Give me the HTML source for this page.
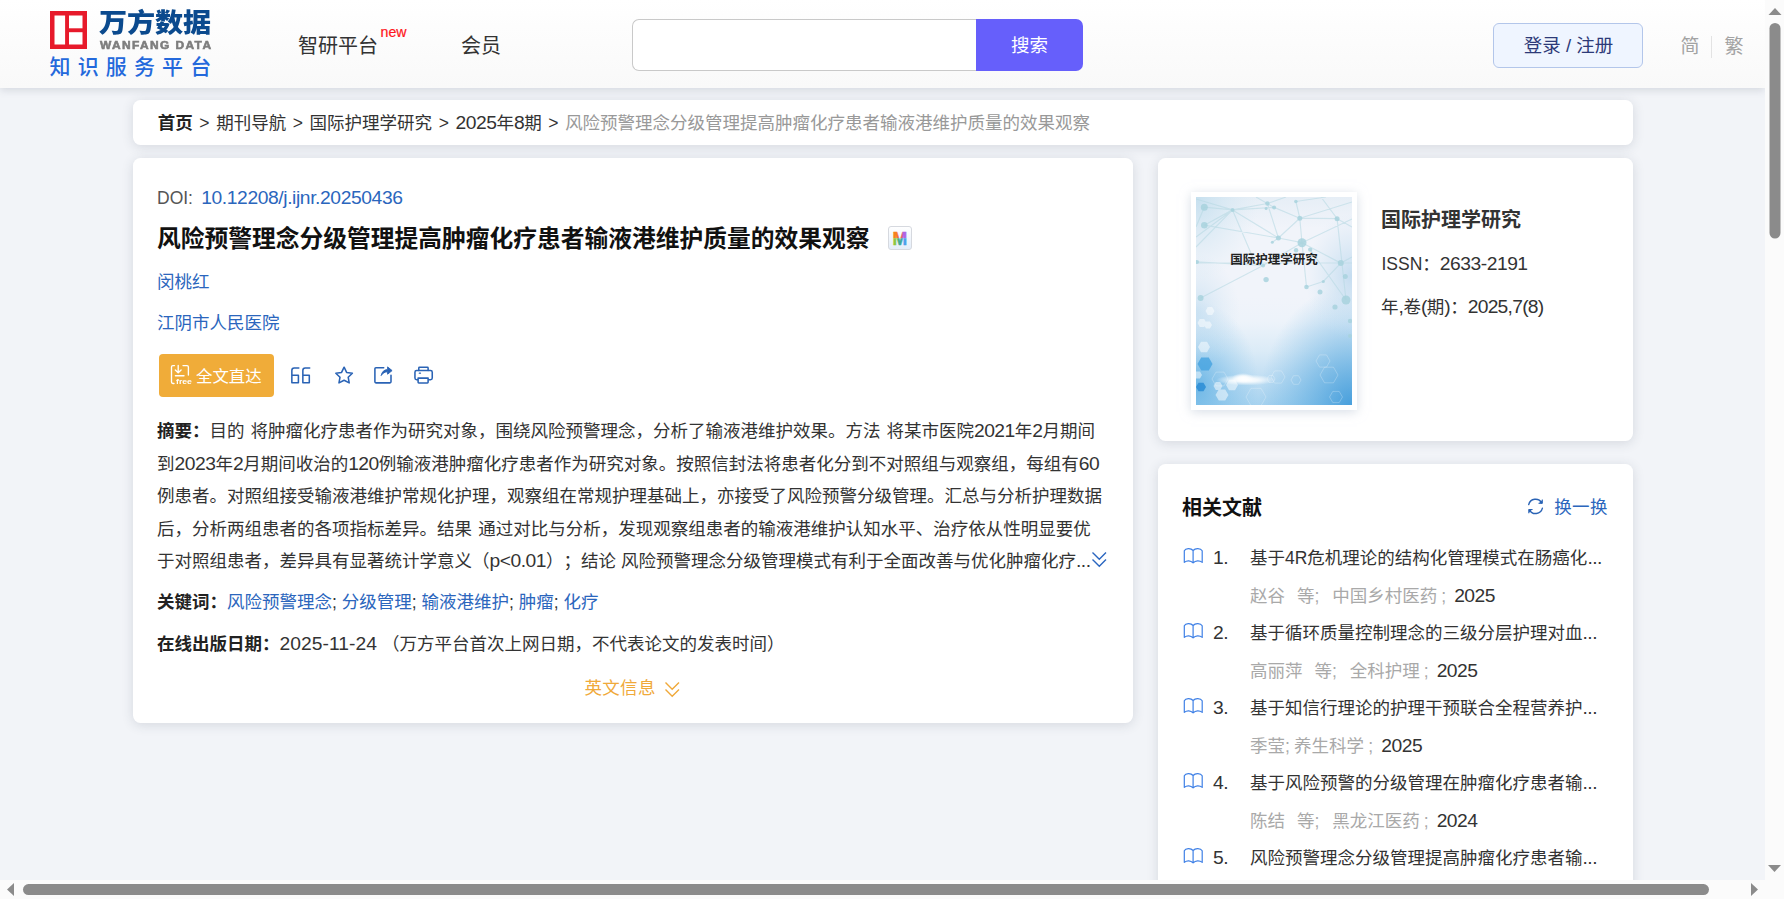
<!DOCTYPE html>
<html lang="zh-CN">
<head>
<meta charset="utf-8">
<title>风险预警理念分级管理提高肿瘤化疗患者输液港维护质量的效果观察</title>
<style>
*{box-sizing:border-box;margin:0;padding:0}
html,body{width:1784px;height:899px;overflow:hidden;background:#f2f4f8}
body{position:relative;font-family:"Liberation Sans","Noto Sans CJK SC",sans-serif;color:#333;font-size:17.5px;text-spacing-trim:space-all}
a{color:inherit;text-decoration:none}
.abs{position:absolute;white-space:nowrap}
#view{position:absolute;left:0;top:0;width:1765px;height:880px;overflow:hidden;background:#f2f4f8}
/* header */
#hdr{position:absolute;left:0;top:0;width:1765px;height:88px;background:linear-gradient(#ffffff 0%,#fdfdfd 30%,#f9f9f9 100%);box-shadow:0 2px 8px rgba(90,100,120,.2)}
.card{position:absolute;background:#fff;border-radius:7.500px;box-shadow:0 2px 12px rgba(50,60,80,.15)}
.blue{color:#2b66bd}
.b{font-weight:700;color:#222}
.n{font-size:1.1em;letter-spacing:-.48px}
.t{position:absolute;white-space:nowrap;line-height:24px;height:24px;margin-top:1px}
</style>
</head>
<body>
<div id="view">

<!-- ================= HEADER ================= -->
<div id="hdr">
  <!-- logo -->
  <svg class="abs" style="left:50px;top:11px" width="38" height="38" viewBox="0 0 38 38">
    <rect x="2.250" y="2.250" width="32.500" height="33.500" fill="#fff" stroke="#e71a2b" stroke-width="4.500"/>
    <rect x="15.100" y="2" width="3.900" height="34" fill="#e71a2b"/>
    <rect x="18" y="17.300" width="17" height="3.900" fill="#e71a2b"/>
  </svg>
  <div class="abs" id="lg1" style="left:99px;top:4.400px;font-family:'Liberation Sans','Noto Sans CJK SC',sans-serif;font-weight:900;font-size:26.500px;line-height:38px;color:#0b4a8e;letter-spacing:-.1px;transform:scaleX(1.062);transform-origin:0 100%">万方数据</div>
  <div class="abs" id="lg2" style="left:100px;top:38px;font-weight:700;font-size:10.6px;line-height:14px;color:#7f7f7f;letter-spacing:1.25px;transform:scaleX(1.125);transform-origin:0 0;-webkit-text-stroke:.55px #7b7b7b">WANFANG DATA</div>
  <div class="abs" id="lg3" style="left:49.500px;top:51.600px;font-family:'Liberation Sans','Noto Sans CJK SC',sans-serif;font-size:21px;font-weight:500;line-height:30px;color:#2469dc;letter-spacing:7.150px">知识服务平台</div>

  <div class="abs" id="nav1" style="left:298px;top:32px;font-size:20px;line-height:28px;color:#333">智研平台</div>
  <div class="abs" id="nav1n" style="left:380.500px;top:23.600px;font-size:14.200px;line-height:16px;color:#ff1520;-webkit-text-stroke:.2px #ff1520">new</div>
  <div class="abs" id="nav2" style="left:461px;top:32px;font-size:20px;line-height:28px;color:#333">会员</div>

  <!-- search -->
  <div class="abs" style="left:632px;top:19px;width:346px;height:52px;background:#fff;border:1px solid #c9c9c9;border-right:none;border-radius:7px 0 0 7px"></div>
  <div class="abs" id="sbtn" style="left:976px;top:19px;width:107px;height:52px;background:#665ffb;border-radius:0 7px 7px 0;color:#fff;font-size:18.500px;line-height:54.500px;text-align:center">搜索</div>

  <!-- login -->
  <div class="abs" id="login" style="left:1493px;top:23px;width:150px;height:45px;background:#eff5ff;border:1px solid #b3c6ea;border-radius:6px;color:#2d3a78;font-size:18.500px;line-height:44px;padding-left:1px;text-align:center">登录 / 注册</div>
  <div class="abs" id="jian" style="left:1680.500px;top:34.300px;font-size:19px;line-height:26px;color:#a3a3a3">简</div>
  <div class="abs" style="left:1711px;top:36px;width:1px;height:22px;background:#e3e3e3"></div>
  <div class="abs" id="fan" style="left:1724.500px;top:34.300px;font-size:19px;line-height:26px;color:#a3a3a3">繁</div>
</div>

<!-- ================= BREADCRUMB ================= -->
<div class="card" style="left:133px;top:100px;width:1500px;height:45px"></div>
<div class="t" id="bc" style="left:157.700px;top:110px;font-size:17.5px;color:#333;word-spacing:1.75px"><span class="b">首页</span> &gt; 期刊导航 &gt; 国际护理学研究 &gt; <span class="n">2025</span>年<span class="n">8</span>期 &gt; <span style="color:#999">风险预警理念分级管理提高肿瘤化疗患者输液港维护质量的效果观察</span></div>

<!-- ================= MAIN CARD ================= -->
<div class="card" style="left:133px;top:158px;width:1000px;height:565px"></div>
<div class="t" id="doi" style="left:157px;top:185px;color:#555">DOI: <span class="blue n" style="margin-left:3.400px;letter-spacing:-.4px">10.12208/j.ijnr.20250436</span></div>
<div class="t" id="title" style="left:157px;top:222px;font-size:23.75px;line-height:32px;height:32px;font-weight:700;color:#111">风险预警理念分级管理提高肿瘤化疗患者输液港维护质量的效果观察</div>
<svg class="abs" id="micon" style="left:888px;top:226px" width="24" height="24" viewBox="0 0 24 24">
  <defs>
    <linearGradient id="mbg" x1="0" y1="0" x2="0" y2="1"><stop offset="0" stop-color="#ffffff"/><stop offset="1" stop-color="#e4edf9"/></linearGradient>
    <linearGradient id="mtop" gradientUnits="userSpaceOnUse" x1="4.700" y1="0" x2="19" y2="0"><stop offset="0" stop-color="#f7811e"/><stop offset=".28" stop-color="#f7811e"/><stop offset=".42" stop-color="#e95a52"/><stop offset=".6" stop-color="#e95a52"/><stop offset=".74" stop-color="#b45fe3"/><stop offset="1" stop-color="#a86ae6"/></linearGradient>
    <linearGradient id="mbot" gradientUnits="userSpaceOnUse" x1="4.700" y1="0" x2="19" y2="0"><stop offset="0" stop-color="#8dc63f"/><stop offset=".28" stop-color="#8dc63f"/><stop offset=".42" stop-color="#3fa99a"/><stop offset=".6" stop-color="#3fa99a"/><stop offset=".74" stop-color="#4aa0ea"/><stop offset="1" stop-color="#4aa0ea"/></linearGradient>
    <clipPath id="mc1"><rect x="0" y="0" width="24" height="12.200"/></clipPath>
    <clipPath id="mc2"><rect x="0" y="12.200" width="24" height="12"/></clipPath>
  </defs>
  <rect x=".5" y=".5" width="23" height="23" rx="2.500" fill="url(#mbg)" stroke="#d6d9df"/>
  <text x="11.900" y="18.700" text-anchor="middle" font-family="Liberation Sans, sans-serif" font-weight="700" font-size="17.600" fill="url(#mtop)" stroke="url(#mtop)" stroke-width=".5" clip-path="url(#mc1)">M</text>
  <text x="11.900" y="18.700" text-anchor="middle" font-family="Liberation Sans, sans-serif" font-weight="700" font-size="17.600" fill="url(#mbot)" stroke="url(#mbot)" stroke-width=".5" clip-path="url(#mc2)">M</text>
</svg>
<div class="t blue" id="author" style="left:157px;top:269px">闵桃红</div>
<div class="t blue" id="org" style="left:157px;top:310px">江阴市人民医院</div>

<div class="abs" id="ftbtn" style="left:159px;top:354px;width:115px;height:43px;background:#f0ac39;border-radius:4px"></div>
<svg class="abs" id="ftico" style="left:169px;top:363px" width="24" height="24" viewBox="0 0 24 24" fill="none" stroke="#fff" stroke-width="1.350" stroke-linecap="round" stroke-linejoin="round">
  <path d="M5.500 2.600H3.900a1.400 1.400 0 0 0-1.400 1.400v15.100a1.400 1.400 0 0 0 1.400 1.400H5"/>
  <path d="M14 2.600h4a1.400 1.400 0 0 1 1.400 1.400V12"/>
  <path d="M9.200 2.500v6.900M6.300 6.900l2.900 2.900 2.900-2.900M6.400 12.700h8.600"/>
</svg>
<div class="abs" id="fttxt0" style="left:175.500px;top:376.500px;font-size:8px;line-height:10px;color:#fff;font-weight:700;transform:scaleX(1.08);transform-origin:0 0">free</div>
<div class="abs" id="fttxt" style="left:196px;top:364.200px;font-size:16.400px;line-height:24px;color:#fff">全文直达</div>

<svg class="abs" id="icons" style="left:285px;top:360px" width="155" height="30" viewBox="0 0 155 30" fill="none" stroke="#2a63b5" stroke-width="1.550" stroke-linejoin="round" stroke-linecap="round">
  <!-- quote -->
  <path d="M13.800 8H9.200Q6.850 8 6.850 10.400V22.650H13.400V15.300H6.850"/>
  <path d="M24.700 8H20.200Q17.850 8 17.850 10.400V22.650H24.300V15.300H17.850"/>
  <!-- star -->
  <path d="M59.10 7.20L61.63 12.42L67.37 13.21L63.19 17.23L64.21 22.94L59.10 20.20L53.99 22.94L55.01 17.23L50.83 13.21L56.57 12.42Z"/>
  <!-- share -->
  <path d="M98.700 7.700H90.900a1 1 0 0 0-1 1V21.850a1 1 0 0 0 1 1h14.100a1 1 0 0 0 1-1V15.300"/>
  <path d="M96.300 15.200c.6-3.400 2.600-5.400 6.300-5.700V6.900l4.500 3.700-4.500 3.600v-2.400c-2.700 .1-4.600 1.100-6.300 3.400z" fill="#2a63b5" stroke-width=".9"/>
  <!-- print -->
  <path d="M133.800 10.400V7.900a.7 .7 0 0 1 .7-.7h7.900a.7 .7 0 0 1 .7 .7V10.400"/>
  <rect x="129.950" y="10.500" width="17.300" height="9.200" rx="1.700"/>
  <path d="M133.100 18.100h10v4.100a.7 .7 0 0 1-.7 .7h-8.600a.7 .7 0 0 1-.7-.7z" fill="#fff"/>
  <path d="M134.300 13.200h1.200" stroke-width="1.200"/>
</svg>

<div class="t" id="ab1" style="left:157px;top:418px;word-spacing:1.100px"><span class="b">摘要：</span>目的 将肿瘤化疗患者作为研究对象，围绕风险预警理念，分析了输液港维护效果。方法 将某市医院<span class="n">2021</span>年<span class="n">2</span>月期间</div>
<div class="t" id="ab2" style="left:157px;top:450.5px">到<span class="n">2023</span>年<span class="n">2</span>月期间收治的<span class="n">120</span>例输液港肿瘤化疗患者作为研究对象。按照信封法将患者化分到不对照组与观察组，每组有<span class="n">60</span></div>
<div class="t" id="ab3" style="left:157px;top:483px">例患者。对照组接受输液港维护常规化护理，观察组在常规护理基础上，亦接受了风险预警分级管理。汇总与分析护理数据</div>
<div class="t" id="ab4" style="left:157px;top:515.500px;word-spacing:1.300px">后，分析两组患者的各项指标差异。结果 通过对比与分析，发现观察组患者的输液港维护认知水平、治疗依从性明显要优</div>
<div class="t" id="ab5" style="left:157px;top:548px">于对照组患者，差异具有显著统计学意义（<span class="n">p&lt;0.01</span>）；结论 风险预警理念分级管理模式有利于全面改善与优化肿瘤化疗<span class="n">...</span></div>
<svg class="abs" id="abchev" style="left:1090px;top:550px" width="18" height="19" viewBox="0 0 18 19" fill="none" stroke="#2a66c0" stroke-width="1.4"><path d="M2.500 2.500L9.300 9.200L16 2.500M2.500 9.600L9.300 16.300L16 9.600"/></svg>

<div class="t" id="kw" style="left:157px;top:589px"><span class="b">关键词：</span><span class="blue">风险预警理念</span>; <span class="blue">分级管理</span>; <span class="blue">输液港维护</span>; <span class="blue">肿瘤</span>; <span class="blue">化疗</span></div>
<div class="t" id="pd" style="left:157px;top:631px"><span class="b">在线出版日期：</span><span class="n" style="letter-spacing:.05px">2025-11-24</span> （万方平台首次上网日期，不代表论文的发表时间）</div>
<div class="t" id="eninfo" style="left:584.500px;top:675px;color:#f0a93a;letter-spacing:.3px">英文信息</div>
<svg class="abs" id="enchev" style="left:663px;top:680px" width="18" height="19" viewBox="0 0 18 19" fill="none" stroke="#f0a93a" stroke-width="1.400"><path d="M2.500 2.500L9.200 9.200L16 2.500M2.500 9.600L9.200 16.300L16 9.600"/></svg>

<!-- ================= SIDE CARDS ================= -->
<div class="card" style="left:1158px;top:158px;width:475px;height:283px"></div>
<div class="abs" id="coverbox" style="left:1191px;top:192px;width:166px;height:218px;background:#fff;box-shadow:0 2px 10px rgba(190,200,215,.6)"></div>
<svg class="abs" id="cover" style="left:1196px;top:196.500px" width="156" height="208.500" viewBox="0 0 156 208.500">
  <defs>
    <linearGradient id="cv1" x1="0" y1="0" x2="0" y2="1"><stop offset="0" stop-color="#e6eef6"/><stop offset=".15" stop-color="#f1f4fa"/><stop offset=".48" stop-color="#f1f4fa"/><stop offset=".6" stop-color="#edf3fa"/><stop offset=".74" stop-color="#dbebf7"/><stop offset=".87" stop-color="#c0def3"/><stop offset="1" stop-color="#a6d2ef"/></linearGradient>
    <radialGradient id="cv3" cx="1" cy="1.020" r=".6"><stop offset="0" stop-color="#3f9ada" stop-opacity=".95"/><stop offset=".5" stop-color="#55a8df" stop-opacity=".5"/><stop offset="1" stop-color="#6ab4e4" stop-opacity="0"/></radialGradient>
    <radialGradient id="cv5" cx="0" cy=".9" r=".4"><stop offset="0" stop-color="#5aaee3" stop-opacity=".8"/><stop offset="1" stop-color="#7fc0e8" stop-opacity="0"/></radialGradient>
    <radialGradient id="cv6" cx="0" cy="0" r=".4"><stop offset="0" stop-color="#c2deee" stop-opacity=".9"/><stop offset="1" stop-color="#d5e8f3" stop-opacity="0"/></radialGradient>
    <radialGradient id="cv7" cx="1" cy=".38" r=".3"><stop offset="0" stop-color="#bcd8ee" stop-opacity=".85"/><stop offset="1" stop-color="#d0e4f3" stop-opacity="0"/></radialGradient>
    <radialGradient id="cv8" cx="0" cy=".55" r=".28"><stop offset="0" stop-color="#bfdcf0" stop-opacity=".7"/><stop offset="1" stop-color="#d0e4f3" stop-opacity="0"/></radialGradient>
    <filter id="cvb" x="-5%" y="-5%" width="110%" height="110%"><feGaussianBlur stdDeviation=".35"/></filter>
    <radialGradient id="cv4" cx=".5" cy=".5" r=".5"><stop offset="0" stop-color="#ffffff" stop-opacity="1"/><stop offset=".4" stop-color="#ffffff" stop-opacity=".8"/><stop offset="1" stop-color="#ffffff" stop-opacity="0"/></radialGradient>
  </defs>
  <rect width="156" height="208.500" fill="url(#cv1)"/>
  <rect width="156" height="208.500" fill="url(#cv3)"/>
  <rect width="156" height="208.500" fill="url(#cv5)"/>
  <rect width="156" height="208.500" fill="url(#cv6)"/>
  <rect width="156" height="208.500" fill="url(#cv7)"/>
  <rect width="156" height="208.500" fill="url(#cv8)"/>
  <path d="M8.3 10.2L36.5 12.9M36.5 12.9L82.4 41M82.4 41L106 45.7M8.3 28.2L36.5 12.9M8.3 28.2L82.4 41M36.5 12.9L71.4 6.5M36.5 12.9L78.1 10.4M36.5 12.9L60 68M78.1 10.4L103.8 21.2M103.8 21.2L141.1 21.7M103.8 21.2L106 45.7M103.8 21.2L82.4 41M99.9 4.5L103.8 21.2M71.4 6.5L82.4 41M106 45.7L156 22M106 45.7L110.5 90M106 45.7L144.8 66.1M0 64.9L67.1 68.5M67.1 68.5L106 45.7M4.6 101L67.1 68.5M110.5 90L127.3 84.5M0 2L36.5 12.9M36.5 12.9L0 50M8.3 10.2L0 30M71.4 6.5L90 0M99.9 4.5L130 0M141.1 21.7L125 0M141.1 21.7L156 30M141.1 21.7L150 103M144.8 66.1L156 60M114.2 52.6L150 103M78.1 10.4L60 0M103.8 21.2L156 5M0 40L36.5 12.9M82.4 41L76.3 45.3M127.3 84.5L144.8 66.1M0 66L156 66" stroke="#b5d8e2" stroke-width="1.200" opacity=".55" fill="none" filter="url(#cvb)"/>
  <g fill="#a6d2dd" opacity=".8"><circle cx="8.3" cy="10.2" r="3.5"/><circle cx="8.3" cy="28.2" r="3.3"/><circle cx="36.5" cy="12.9" r="2"/><circle cx="71.4" cy="6.5" r="2.2"/><circle cx="78.1" cy="10.4" r="2"/><circle cx="70.1" cy="11.6" r="1.5"/><circle cx="99.9" cy="4.5" r="1.8"/><circle cx="103.8" cy="21.2" r="2.5"/><circle cx="141.1" cy="21.7" r="2.5"/><circle cx="82.4" cy="41" r="2.5"/><circle cx="76.3" cy="45.3" r="1.5"/><circle cx="106" cy="45.7" r="4.5"/><circle cx="114.2" cy="52.6" r="2.2"/><circle cx="100.1" cy="53.2" r="2.2"/><circle cx="1" cy="64.9" r="2"/><circle cx="67.1" cy="68.5" r="2"/><circle cx="144.8" cy="66.1" r="3"/><circle cx="70.1" cy="82.6" r="2.7"/><circle cx="149.3" cy="79.6" r="2.5"/><circle cx="127.3" cy="84.5" r="1.6"/><circle cx="110.5" cy="90" r="2.3"/><circle cx="124" cy="95.1" r="2.5"/><circle cx="4.6" cy="101" r="3"/><circle cx="150" cy="103" r="4.5"/><circle cx="139" cy="110" r="2.6"/><circle cx="154" cy="124" r="2.2"/><circle cx="154" cy="139" r="2"/></g>
  <path d="M18.5 114.0L16.2 117.9L11.8 117.9L9.5 114.0L11.7 110.1L16.2 110.1ZM10.5 126.0L8.2 129.9L3.8 129.9L1.5 126.0L3.7 122.1L8.2 122.1ZM16.0 128.0L14.0 131.5L10.0 131.5L8.0 128.0L10.0 124.5L14.0 124.5ZM14.0 150.0L11.0 155.2L5.0 155.2L2.0 150.0L5.0 144.8L11.0 144.8ZM26.5 189.0L24.2 192.9L19.8 192.9L17.5 189.0L19.8 185.1L24.2 185.1ZM42.0 188.0L39.0 193.2L33.0 193.2L30.0 188.0L33.0 182.8L39.0 182.8ZM6.0 178.0L4.0 181.5L0.0 181.5L-2.0 178.0L-0.0 174.5L4.0 174.5ZM32.5 198.0L29.2 203.6L22.8 203.6L19.5 198.0L22.7 192.4L29.2 192.4Z" fill="#ffffff" opacity=".5"/>
  <path d="M32.0 182.0L28.0 188.9L20.0 188.9L16.0 182.0L20.0 175.1L28.0 175.1ZM89.0 180.0L85.5 186.1L78.5 186.1L75.0 180.0L78.5 173.9L85.5 173.9ZM79.0 182.0L77.0 185.5L73.0 185.5L71.0 182.0L73.0 178.5L77.0 178.5ZM70.0 200.0L65.0 208.7L55.0 208.7L50.0 200.0L55.0 191.3L65.0 191.3ZM134.0 164.0L130.5 170.1L123.5 170.1L120.0 164.0L123.5 157.9L130.5 157.9ZM142.0 178.0L137.5 185.8L128.5 185.8L124.0 178.0L128.5 170.2L137.5 170.2ZM146.5 200.0L143.2 205.6L136.8 205.6L133.5 200.0L136.8 194.4L143.2 194.4ZM105.0 183.0L102.5 187.3L97.5 187.3L95.0 183.0L97.5 178.7L102.5 178.7Z" fill="none" stroke="#ffffff" stroke-width=".8" opacity=".3"/>
  <path d="M16.5 167.0L12.8 173.5L5.3 173.5L1.5 167.0L5.2 160.5L12.8 160.5Z" fill="#45a3e0" opacity=".8"/>
  <path d="M10.0 190.0L7.5 194.3L2.5 194.3L0.0 190.0L2.5 185.7L7.5 185.7Z" fill="#2f8fd6" opacity=".9"/>
  <ellipse cx="50" cy="183" rx="30" ry="5.500" fill="url(#cv4)"/>
  <ellipse cx="47" cy="181" rx="11" ry="5" fill="url(#cv4)"/>
  <text id="covertxt" x="78.100" y="66.600" text-anchor="middle" font-family="Liberation Sans, Noto Sans CJK SC, sans-serif" font-weight="700" font-size="12.500" fill="#222">国际护理学研究</text>
</svg>
<div class="t" id="jt" style="left:1381px;top:205px;font-size:20px;line-height:28px;height:28px;font-weight:700;color:#333">国际护理学研究</div>
<div class="t" id="issn" style="left:1381.500px;top:251px">ISSN：<span class="n">2633-2191</span></div>
<div class="t" id="yvi" style="left:1381px;top:293.500px">年<span class="n">,</span>卷<span class="n">(</span>期<span class="n">)</span>：<span class="n" style="letter-spacing:-.75px">2025,7(8)</span></div>

<div class="card" style="left:1158px;top:463.700px;width:475px;height:500px"></div>
<div class="t" id="rel" style="left:1182px;top:493px;font-size:20px;line-height:28px;height:28px;font-weight:700;color:#111">相关文献</div>
<svg class="abs" id="refresh" style="left:1525px;top:496px" width="21" height="21" viewBox="0 0 21 21" fill="none" stroke="#2a63b5" stroke-width="1.400" stroke-linecap="round" stroke-linejoin="round">
  <path d="M3.700 8.600A7 7 0 0 1 16.700 7"/><path d="M17.300 3.900V7.300H13.900" fill="#2a63b5" stroke-width="1"/>
  <path d="M17.400 12.200A7 7 0 0 1 4.400 13.800"/><path d="M3.800 16.900V13.500H7.200" fill="#2a63b5" stroke-width="1"/>
</svg>
<div class="t blue" id="huan" style="left:1554.300px;top:493.600px;letter-spacing:.3px">换一换</div>
<svg class="abs" style="left:1182px;top:546px" width="22" height="20" viewBox="0 0 22 20" fill="none" stroke="#3f80e6" stroke-width="1.200" stroke-linejoin="round"><path d="M2.300 16.400V4.800C3.600 2 8.800 1.700 11.100 4.500C13.400 1.700 18.600 2 20.200 4.800V16.400C17.600 14.100 13.500 14.300 11.100 16.900C8.700 14.300 4.900 14.100 2.300 16.400ZM11.100 4.500V16.800"/></svg>
<div class="t" id="n1" style="left:1213px;top:545px"><span class="n">1.</span></div>
<div class="t" id="it1" style="left:1250px;top:545px">基于4R危机理论的结构化管理模式在肠癌化<span class="n">...</span></div>
<div class="t" id="is1" style="left:1250px;top:582.5px;color:#a9a9a9"><span>赵谷</span><span style="margin-left:11.9px;">等;</span><span style="margin-left:12.9px;">中国乡村医药</span><span style="margin-left:4.1px;">;</span><span class="n" style="margin-left:8px;color:#333">2025</span></div>
<svg class="abs" style="left:1182px;top:621px" width="22" height="20" viewBox="0 0 22 20" fill="none" stroke="#3f80e6" stroke-width="1.200" stroke-linejoin="round"><path d="M2.300 16.400V4.800C3.600 2 8.800 1.700 11.100 4.500C13.400 1.700 18.600 2 20.200 4.800V16.400C17.600 14.100 13.500 14.300 11.100 16.900C8.700 14.300 4.900 14.100 2.300 16.400ZM11.100 4.500V16.800"/></svg>
<div class="t" id="n2" style="left:1213px;top:620px"><span class="n">2.</span></div>
<div class="t" id="it2" style="left:1250px;top:620px">基于循环质量控制理念的三级分层护理对血<span class="n">...</span></div>
<div class="t" id="is2" style="left:1250px;top:657.5px;color:#a9a9a9"><span>高丽萍</span><span style="margin-left:11.9px;">等;</span><span style="margin-left:12.9px;">全科护理</span><span style="margin-left:4.1px;">;</span><span class="n" style="margin-left:8px;color:#333">2025</span></div>
<svg class="abs" style="left:1182px;top:696px" width="22" height="20" viewBox="0 0 22 20" fill="none" stroke="#3f80e6" stroke-width="1.200" stroke-linejoin="round"><path d="M2.300 16.400V4.800C3.600 2 8.800 1.700 11.100 4.500C13.400 1.700 18.600 2 20.200 4.800V16.400C17.600 14.100 13.500 14.300 11.100 16.900C8.700 14.300 4.900 14.100 2.300 16.400ZM11.100 4.500V16.800"/></svg>
<div class="t" id="n3" style="left:1213px;top:695px"><span class="n">3.</span></div>
<div class="t" id="it3" style="left:1250px;top:695px">基于知信行理论的护理干预联合全程营养护<span class="n">...</span></div>
<div class="t" id="is3" style="left:1250px;top:732.5px;color:#a9a9a9"><span>季莹;</span><span style="margin-left:4.1px;">养生科学</span><span style="margin-left:4.4px;">;</span><span class="n" style="margin-left:8px;color:#333">2025</span></div>
<svg class="abs" style="left:1182px;top:771px" width="22" height="20" viewBox="0 0 22 20" fill="none" stroke="#3f80e6" stroke-width="1.200" stroke-linejoin="round"><path d="M2.300 16.400V4.800C3.600 2 8.800 1.700 11.100 4.500C13.400 1.700 18.600 2 20.200 4.800V16.400C17.600 14.100 13.500 14.300 11.100 16.900C8.700 14.300 4.900 14.100 2.300 16.400ZM11.100 4.500V16.800"/></svg>
<div class="t" id="n4" style="left:1213px;top:770px"><span class="n">4.</span></div>
<div class="t" id="it4" style="left:1250px;top:770px">基于风险预警的分级管理在肿瘤化疗患者输<span class="n">...</span></div>
<div class="t" id="is4" style="left:1250px;top:807.5px;color:#a9a9a9"><span>陈结</span><span style="margin-left:11.9px;">等;</span><span style="margin-left:12.9px;">黑龙江医药</span><span style="margin-left:4.1px;">;</span><span class="n" style="margin-left:8px;color:#333">2024</span></div>
<svg class="abs" style="left:1182px;top:846px" width="22" height="20" viewBox="0 0 22 20" fill="none" stroke="#3f80e6" stroke-width="1.200" stroke-linejoin="round"><path d="M2.300 16.400V4.800C3.600 2 8.800 1.700 11.100 4.500C13.400 1.700 18.600 2 20.200 4.800V16.400C17.600 14.100 13.500 14.300 11.100 16.900C8.700 14.300 4.900 14.100 2.300 16.400ZM11.100 4.500V16.800"/></svg>
<div class="t" id="n5" style="left:1213px;top:845px"><span class="n">5.</span></div>
<div class="t" id="it5" style="left:1250px;top:845px">风险预警理念分级管理提高肿瘤化疗患者输<span class="n">...</span></div>

</div>

<!-- ================= SCROLLBARS ================= -->
<div id="vsb" class="abs" style="left:1765px;top:0;width:19px;height:880px;background:#fbfbfb">
  <svg class="abs" style="left:0;top:0" width="19" height="880">
    <path d="M3.5 15 L10 8 L16.5 15 Z" fill="#8b8b8b"/>
    <rect x="4.500" y="23" width="11" height="215.500" rx="5.500" fill="#8b8b8b"/>
    <path d="M3 865 L16 865 L9.500 872 Z" fill="#8b8b8b"/>
  </svg>
</div>
<div id="hsb" class="abs" style="left:0;top:880px;width:1784px;height:19px;background:#fbfbfb">
  <svg class="abs" style="left:0;top:0" width="1784" height="19">
    <path d="M14 3 L7 9.5 L14 16 Z" fill="#8b8b8b"/>
    <rect x="23" y="4.100" width="1686" height="11" rx="5.500" fill="#8b8b8b"/>
    <path d="M1751 3 L1758 9.5 L1751 16 Z" fill="#8b8b8b"/>
  </svg>
</div>
</body>
</html>
